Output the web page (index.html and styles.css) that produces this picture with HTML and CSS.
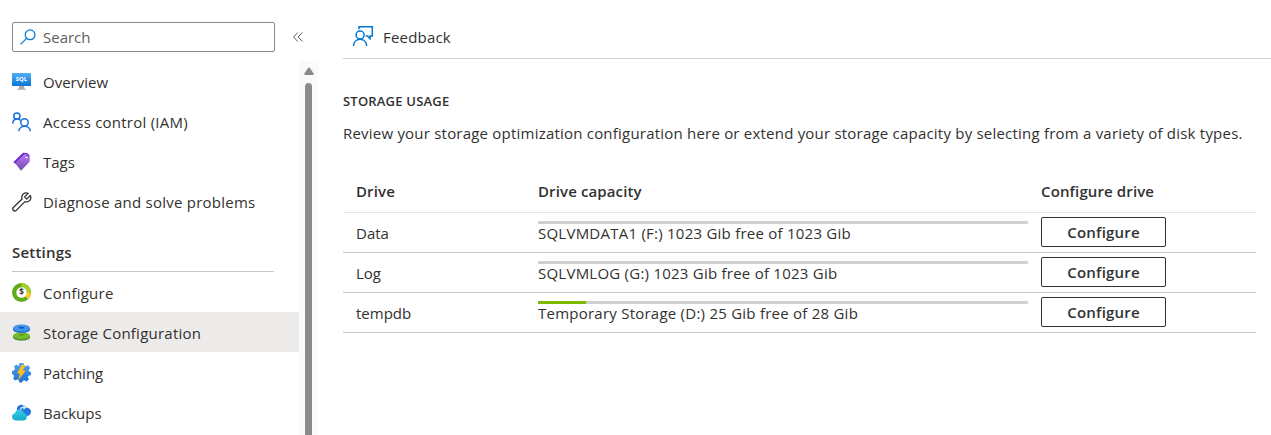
FILE: index.html
```html
<!DOCTYPE html>
<html lang="en">
<head>
<meta charset="utf-8">
<title>Storage Configuration</title>
<link rel="stylesheet" href="styles.css">
</head>
<body>
<div class="app">
  <aside class="sidebar">
    <div class="search-row">
      <div class="search">
        <svg class="search-icon" width="16" height="16" viewBox="0 0 16 16" fill="none" stroke="#0078d4" stroke-width="1.2"><circle cx="10.1" cy="5.8" r="4.9"/><path d="M6.5 9.4L.5 15.4"/></svg>
        <span>Search</span>
      </div>
      <svg class="collapse" width="10" height="10" viewBox="0 0 10 10" fill="none" stroke="#605e5c" stroke-width="1"><path d="M4.7.5L.6 5l4.1 4.5M9.3.5L5.2 5l4.1 4.5"/></svg>
    </div>
    <div class="menu-area">
      <nav class="menu">
        <a class="item"><svg width="20" height="20" viewBox="0 0 20 20"><defs><linearGradient id="sq" x2="0" y2="1"><stop stop-color="#50b0f5"/><stop offset="1" stop-color="#0b74d8"/></linearGradient></defs><path d="M7.3 13.5h4.6l.5 3 1.7.6v.6h-9v-.6l1.7-.6z" fill="#aaa"/><rect y="1" width="19" height="13" rx=".5" fill="url(#sq)"/><text class="sql" x="9.5" y="9.2" text-anchor="middle">SQL</text></svg><span>Overview</span></a>
        <a class="item wide"><svg width="20" height="20" viewBox="0 0 20 20" fill="none" stroke="#1870dc" stroke-width="1.5"><circle cx="4.9" cy="4" r="3.1"/><path d="M.7 11.5C.7 5.800 8 6 8.300 8.700"/><circle cx="12.5" cy="10.400" r="3.700"/><path d="M6.900 19.200c.4-6.600 11.200-6.600 11.400 0"/></svg><span>Access control (IAM)</span></a>
        <a class="item"><svg width="20" height="20" viewBox="0 0 20 20"><defs><linearGradient id="tg" x2="0" y2="1"><stop stop-color="#b77af4"/><stop offset="1" stop-color="#7848ad"/></linearGradient></defs><path d="M1.200 10.300L11 .8l4.300.2 1.500 2.200-12.600 9z" fill="#6f2bd5"/><path d="M3.200 11.300L12.600 2l3.500.3 1.700 2.300-.2 5.200L9 18.700z" fill="url(#tg)"/><circle cx="14.600" cy="5.200" r="1.100" fill="#fff"/><path d="M14.500 4.800c1-3.900 3.200-2.300 2.100-.2" fill="none" stroke="#5b25ac"/></svg><span>Tags</span></a>
        <a class="item wide"><svg width="20" height="20" viewBox="0 0 20 20" fill="none" stroke="#323130" stroke-width="1.300" stroke-linejoin="round"><path d="M16.200 1.300C12.500-.3 8.800 3 10.100 7L1.300 15.500c-1.600 2 .9 4.500 3 2.900l8.600-8.800c4 1.300 7.200-2.400 5.400-6.100l-3.600 3.600-2.100-2.200z"/></svg><span>Diagnose and solve problems</span></a>
        <h2 class="group">Settings</h2>
        <a class="item wide"><svg width="20" height="20" viewBox="0 0 20 20"><circle cx="9.500" cy="9.500" r="7" fill="#fff" stroke="#5fab1d" stroke-width="5"/><path d="M9.500 2.500a7 7 0 0 1 7 7" fill="none" stroke="#a5d02b" stroke-width="5"/><path d="M16.500 9.500a7 7 0 0 1-2.100 5" fill="none" stroke="#ffc928" stroke-width="5"/><circle cx="9.500" cy="9.500" r="5.200" fill="#fff"/><text class="dollar" x="9.500" y="12.400" text-anchor="middle">$</text></svg><span>Configure</span></a>
        <a class="item wide selected"><svg width="20" height="20" viewBox="0 0 20 20"><path d="M1 12.500v2c1 4.200 16 4.200 17 0v-2z" fill="#529326"/><ellipse cx="9.500" cy="12.600" rx="8.500" ry="3.500" fill="#76bc2d"/><ellipse cx="9.500" cy="11.800" rx="3" ry=".8" fill="#529326"/><path d="M1 5v1.800c1 4.200 16 4.200 17 0V5z" fill="#176fca"/><ellipse cx="9.500" cy="5" rx="8.500" ry="3.500" fill="#4194ec"/><ellipse cx="9.500" cy="4.700" rx="3" ry=".9" fill="#0959ab"/></svg><span>Storage Configuration</span></a>
        <a class="item"><svg width="20" height="20" viewBox="0 0 20 20"><defs><linearGradient id="gr" x2="0" y2="1"><stop stop-color="#52a4f4"/><stop offset="1" stop-color="#1972d0"/></linearGradient></defs><path d="M7.500 0h4l.6 2.700 1.500.7L16 2l2.200 3-1.600 2 .5 1.400L19 9v3l-2.400.8-.7 1.500 1.100 2.300-2.600 2-2-1.300-1.400.5L10 19.500H7.500l-.8-2.300-1.500-.6-2.300 1-1.800-2.300 1.200-2-.6-1.400L0 11V8l2.300-.7.7-1.500L2 3.400l2.400-2L6.500 3z" fill="url(#gr)"/><path d="M9.500 2h4.200l-3 5.500h3.200L6 17.500l2-7H5z" fill="#ffbd17"/></svg><span>Patching</span></a>
        <a class="item"><svg width="20" height="20" viewBox="0 0 20 20"><defs><linearGradient id="cl" x2="0" y2="1"><stop stop-color="#35cfef"/><stop offset="1" stop-color="#18aaca"/></linearGradient></defs><path d="M4.800 6C5.200 1 12 .2 14.300 4.500c6.200.1 6.200 8 .8 8.500H7z" fill="#2675dd"/><path d="M8.400 6.500c.3-1.800 2-2.500 4.500-2.300M11.200 2.500l2.200 1.800-2 2" fill="none" stroke="#d9edff" stroke-width="1.200"/><path d="M4 17.400C-1.300 17.300-1 10.800 3 10.300 3.800 5 11 5.400 11.700 10.100c4.200.2 4.300 7 .2 7.300z" fill="url(#cl)"/></svg><span>Backups</span></a>
      </nav>
      <div class="scrollbar"><svg width="10" height="8" viewBox="0 0 10 8"><path d="M4.200.8Q5 0 5.800.8L9.600 6.500Q10 8 8.700 8H1.300Q0 8 .4 6.500z" fill="#8a8a8a"/></svg><div class="thumb"></div></div>
    </div>
  </aside>
  <main class="main">
    <div class="toolbar">
      <svg width="22" height="22" viewBox="0 0 22 22" fill="none" stroke="#0078d4" stroke-width="1.500"><path d="M7 4.200V1.800h13.300v9.100h-2.200v2.700l-2.700-2.700h-1.700"/><circle cx="8.100" cy="10" r="4"/><path d="M1.500 21c.2-9 13-9 13.200 0"/></svg>
      <span>Feedback</span>
    </div>
    <h1 class="title">STORAGE USAGE</h1>
    <p class="description">Review your storage optimization configuration here or extend your storage capacity by selecting from a variety of disk types.</p>
    <div class="table">
      <div class="row head"><span>Drive</span><span>Drive capacity</span><span>Configure drive</span></div>
      <div class="row"><span>Data</span><div class="capacity"><div class="bar"></div><span>SQLVMDATA1 (F:) 1023 Gib free of 1023 Gib</span></div><button class="button">Configure</button></div>
      <div class="row"><span>Log</span><div class="capacity"><div class="bar"></div><span>SQLVMLOG (G:) 1023 Gib free of 1023 Gib</span></div><button class="button">Configure</button></div>
      <div class="row"><span>tempdb</span><div class="capacity"><div class="bar"><div class="used" style="width:9.8%"></div></div><span>Temporary Storage (D:) 25 Gib free of 28 Gib</span></div><button class="button">Configure</button></div>
    </div>
  </main>
</div>
</body>
</html>
```
FILE: styles.css
```css
* { box-sizing: border-box; }
body { margin: 0; background: #fff; color: #323130; font: 15px/20px "Open Sans", "Noto Sans", sans-serif; overflow: hidden; }
svg { display: block; flex: none; }
.app { display: flex; height: 435px; }
.sidebar { width: 318px; flex: none; display: flex; flex-direction: column; }
.search-row { display: flex; align-items: center; padding: 22px 0 0 12px; }
.search { width: 263px; height: 30px; border: 1px solid #8a8886; border-radius: 2px; display: flex; align-items: center; gap: 7px; padding-left: 7px; color: #605e5c; }
.collapse { margin-left: 18px; }
.menu-area { display: flex; flex: 1; min-height: 0; padding-top: 9px; }
.menu { width: 299px; }
.item { height: 40px; display: flex; align-items: center; gap: 11px; padding: 2px 0 0 12px; white-space: nowrap; }
.item svg { margin-top: -1px; }
.wide span { letter-spacing: .24px; }
.selected { background: #edebe9; }
.group { margin: 0 25px 0 12px; height: 51px; border-bottom: 1px solid #c8c6c4; font-size: 15px; line-height: 20px; font-weight: 600; letter-spacing: .2px; padding-top: 21px; }
.sql { font: bold 6px "Open Sans", sans-serif; fill: #fff; }
.dollar { font: bold 8px "Open Sans", sans-serif; fill: #333; }
.scrollbar { width: 19px; background: #fafafa; display: flex; flex-direction: column; align-items: center; padding-top: 6px; gap: 8px; }
.thumb { width: 7px; flex: 1; background: #8a8a8a; border-radius: 4px 4px 0 0; }
.main { flex: 1; padding-left: 25px; min-width: 0; }
.toolbar { height: 59px; border-bottom: 1px solid #d2d0ce; display: flex; align-items: center; gap: 9px; padding: 16px 0 0 9px; letter-spacing: .2px; }
.toolbar svg { margin-top: -3px; }
.title { font-size: 13px; line-height: 20px; font-weight: 600; letter-spacing: .2px; margin: 32px 0 0; }
.description { margin: 12px 0 0; white-space: nowrap; letter-spacing: .212px; }
.table { width: 913px; margin-top: 29px; }
.row { height: 40px; display: grid; grid-template-columns: 182px 503px 125px; padding: 0 0 0 13px; align-items: start; border-bottom: 1px solid #c8c6c4; white-space: nowrap; }
.row > span { padding-top: 10px; }
.row.head { height: 41px; border-color: #e8e6e4; font-weight: 600; letter-spacing: .12px; }
.row.head > span { padding-top: 9px; }
.capacity { padding-top: 8px; }
.capacity span { display: block; margin-top: -1px; letter-spacing: .24px; }
.bar { width: 490px; height: 3px; background: #d0d0d0; }
.used { height: 3px; background: #7fba00; }
.button { width: 125px; height: 30px; margin-top: 4px; padding: 0; border: 1px solid #323130; border-radius: 2px; background: #fff; color: #323130; font: 600 15px/20px "Open Sans", sans-serif; letter-spacing: .2px; }
```
